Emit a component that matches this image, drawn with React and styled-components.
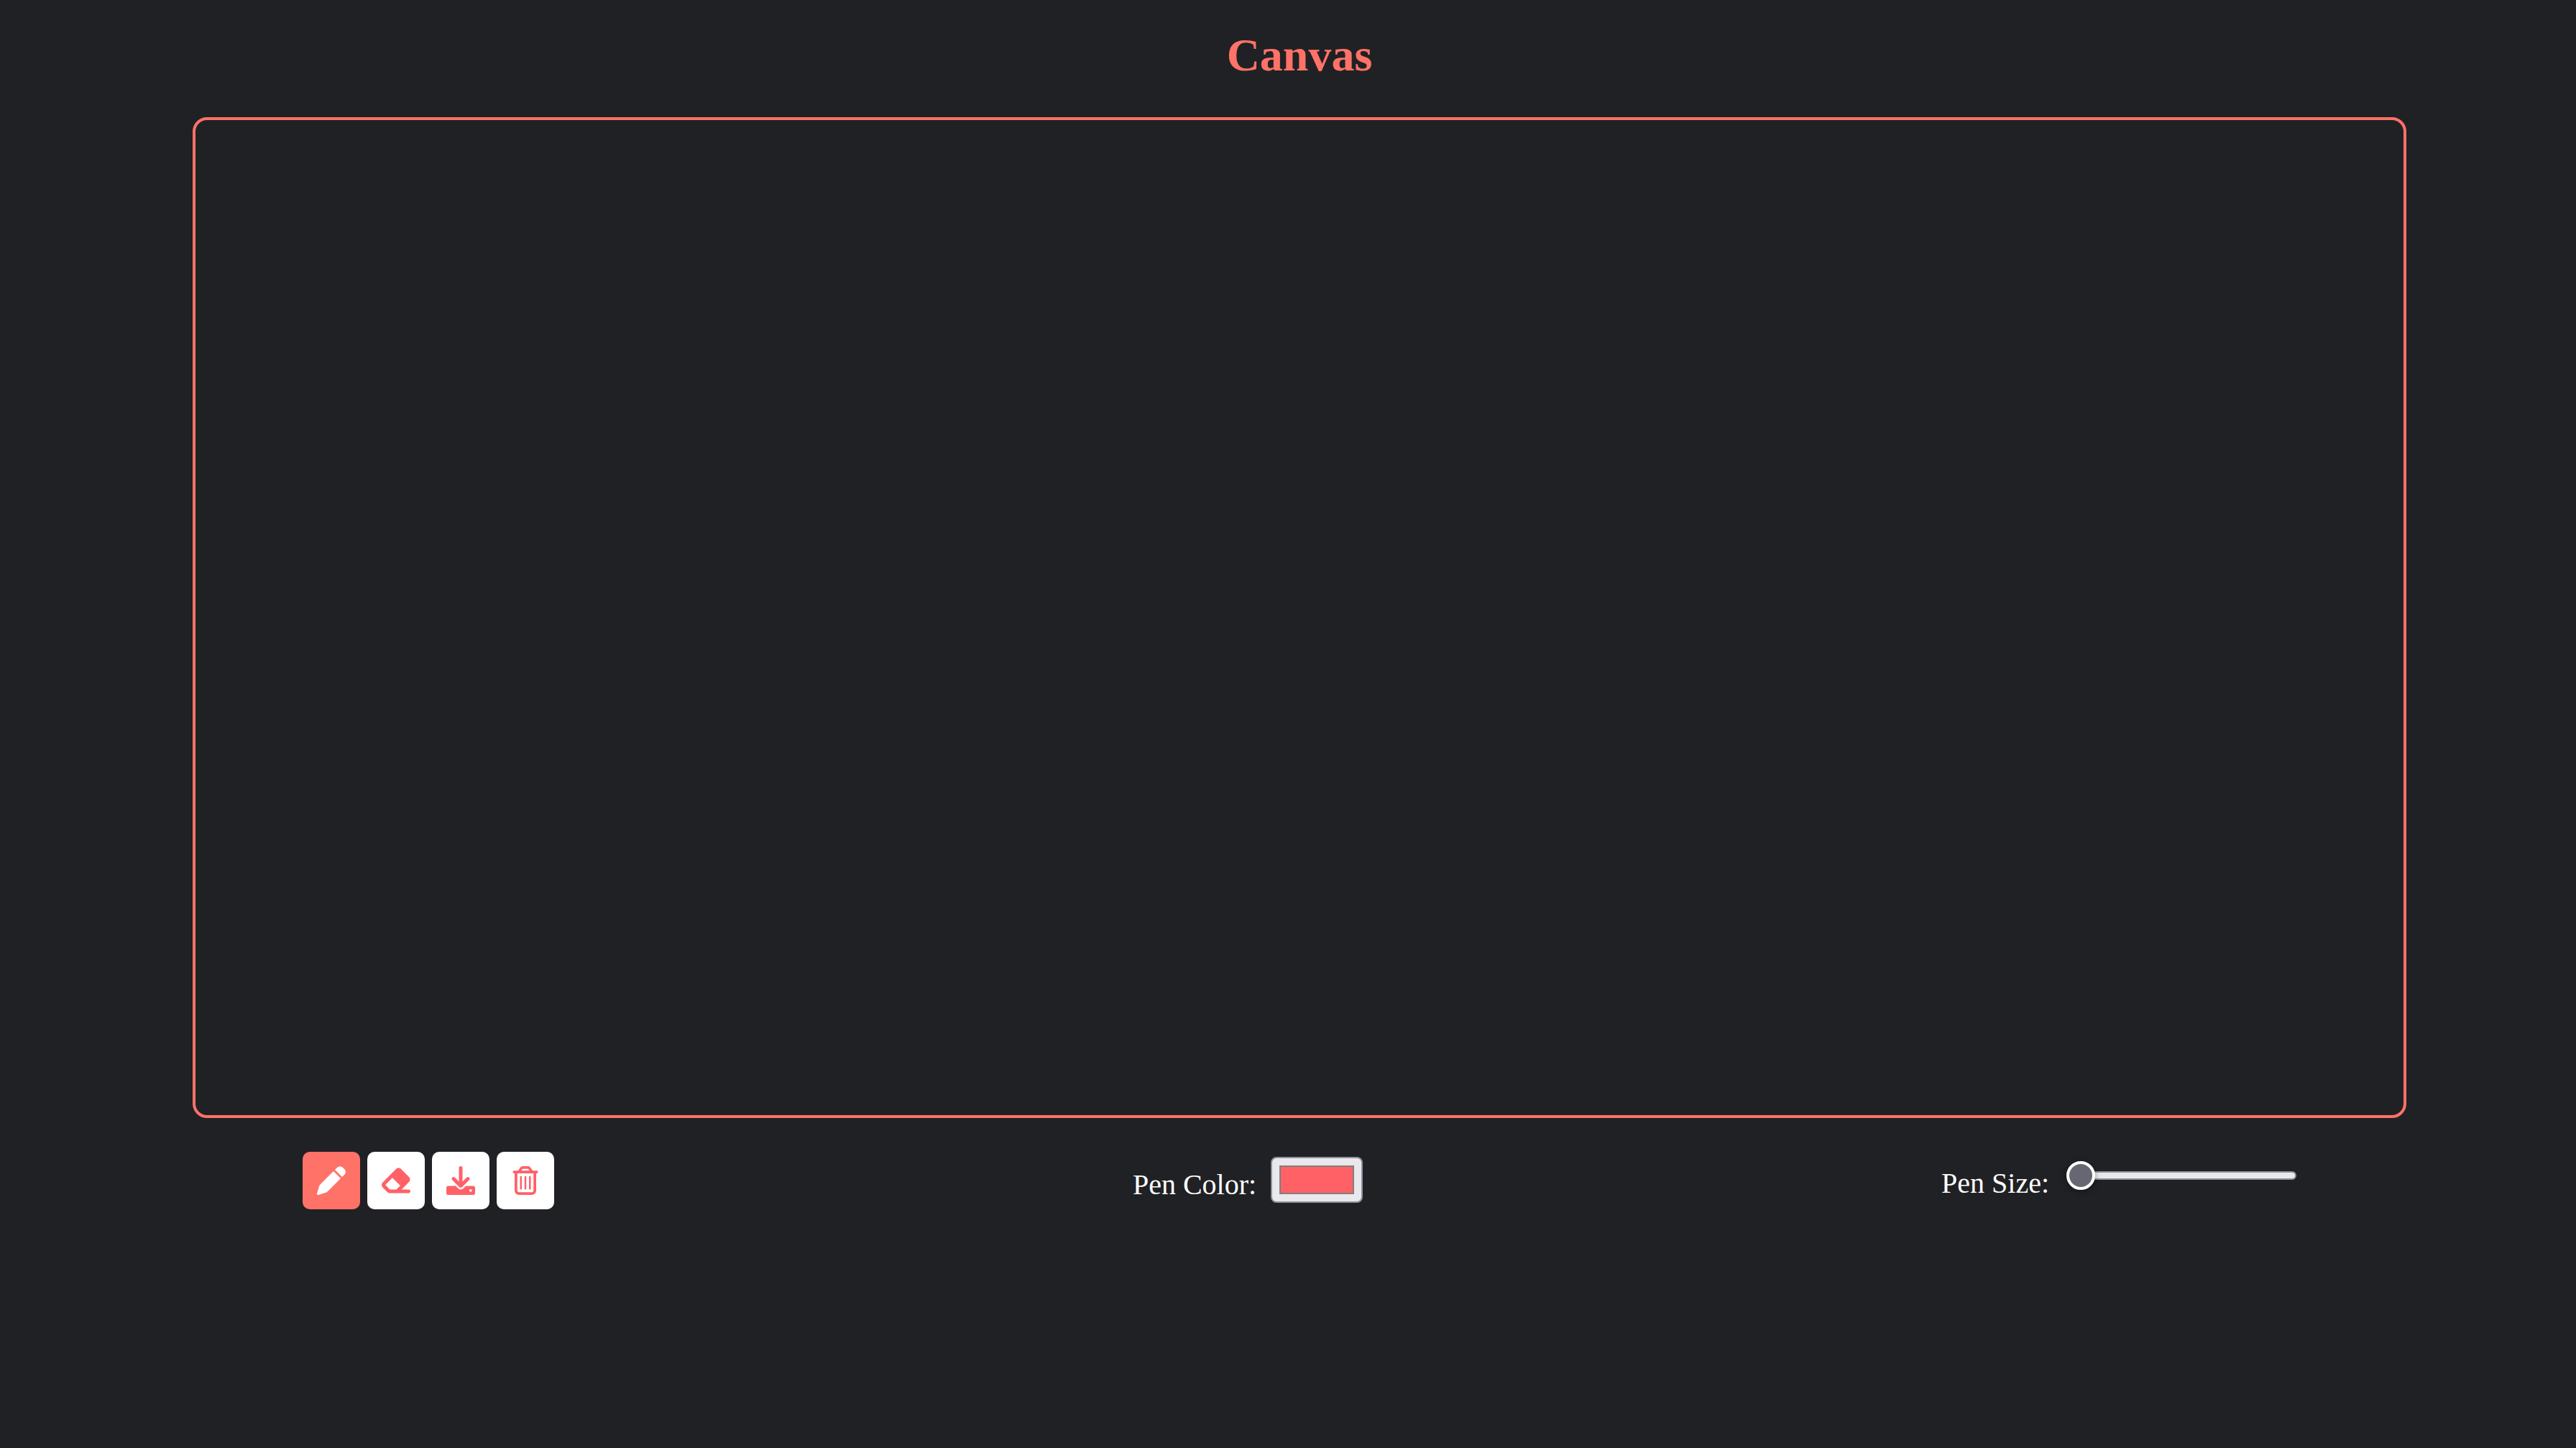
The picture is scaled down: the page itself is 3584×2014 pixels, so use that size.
import React, { useState } from "react";
import styled, { createGlobalStyle } from "styled-components";
import { FaRegTrashCan } from "react-icons/fa6";

const coral = "#ff7268";
const pink = "#ff6167";

const GlobalStyle = createGlobalStyle`
  *, *::before, *::after {
    box-sizing: border-box;
  }
  body {
    margin: 0;
    background: #202124;
    color: #fff;
    font-family: "Liberation Serif", "Times New Roman", serif;
  }
`;

const Page = styled.main`
  display: flex;
  flex-direction: column;
  align-items: center;
  padding: 40px 0 0 32px;
`;

const Title = styled.h1`
  margin: 0 0 49px;
  font-size: 64px;
  line-height: 74px;
  font-weight: 700;
  color: ${coral};
`;

const Board = styled.canvas`
  display: block;
  width: calc(100% - 472px);
  height: 1392px;
  border: 4px solid ${coral};
  border-radius: 20px;
`;

const Toolbar = styled.div`
  display: flex;
  justify-content: space-between;
  align-items: flex-start;
  width: calc(100% - 778px);
  margin-top: 47px;
`;

const Tools = styled.div`
  display: flex;
  gap: 10px;
`;

const ToolButton = styled.button`
  display: flex;
  align-items: center;
  justify-content: center;
  width: 80px;
  height: 80px;
  padding: 0;
  border: 0;
  border-radius: 10px;
  background: ${({ $active }) => ($active ? coral : "#fff")};
  color: ${({ $active }) => ($active ? "#fff" : pink)};
  cursor: pointer;

  svg {
    width: 40px;
    height: 40px;
    fill: currentColor;
  }
`;

const Field = styled.div`
  display: flex;
  align-items: flex-start;
  gap: ${({ $gap }) => $gap}px;
  padding-top: ${({ $top }) => $top}px;
`;

const FieldLabel = styled.label`
  padding-top: ${({ $drop }) => $drop}px;
  font-size: 40px;
  line-height: 46px;
`;

const ColorInput = styled.input`
  appearance: none;
  width: 128px;
  height: 64px;
  padding: 10px;
  border: 2px solid #8f8f9d;
  border-radius: 8px;
  background: #e9e9ed;

  &::-webkit-color-swatch-wrapper {
    padding: 0;
  }
  &::-webkit-color-swatch {
    border: 2px solid #808080;
    border-radius: 0;
  }
`;

const SizeInput = styled.input`
  appearance: none;
  width: 320px;
  height: 40px;
  margin: 0;
  background: transparent;

  &::-webkit-slider-runnable-track {
    height: 12px;
    border: 2px solid #8f8f9d;
    border-radius: 6px;
    background: #e9e9ed;
  }
  &::-webkit-slider-thumb {
    appearance: none;
    width: 40px;
    height: 40px;
    margin: -16px 0 0 -2px;
    border: 4px solid #fff;
    border-radius: 50%;
    background: #676774;
    box-shadow: 0 2px 8px rgba(0, 0, 0, 0.4);
  }
`;

const PencilIcon = () => (
  <svg viewBox="0 0 120 120" aria-hidden="true">
    <path d="M69 21 99 51 45 105Q42 108 37 110L6 120Q-1 121 0 114L9 84Q11 79 14 76Z" />
    <path d="M75 15 85 5Q96-4 107 5L115 13Q124 24 115 35L105 45Z" />
  </svg>
);

const EraserIcon = () => (
  <svg viewBox="38 6 506 506" aria-hidden="true">
    <path d="M290.7 57.4L57.4 290.7c-25 25-25 65.5 0 90.5l80 80c12 12 28.3 18.7 45.3 18.7H512c17.7 0 32-14.3 32-32s-14.3-32-32-32H387.9L518.6 285.3c25-25 25-65.5 0-90.5L381.3 57.4c-25-25-65.5-25-90.5 0zM297.4 416H182.6l-80-80L227.3 211.3 364.7 348.7 297.4 416z" />
  </svg>
);

const DownloadIcon = () => (
  <svg viewBox="0 0 512 512" aria-hidden="true">
    <path d="M288 32c0-17.7-14.3-32-32-32s-32 14.3-32 32V274.7l-73.4-73.4c-12.5-12.5-32.8-12.5-45.3 0s-12.5 32.8 0 45.3l128 128c12.5 12.5 32.8 12.5 45.3 0l128-128c12.5-12.5 12.5-32.8 0-45.3s-32.8-12.5-45.3 0L288 274.7V32z" />
    <path d="M36 352Q0 352 0 388V476Q0 512 36 512H476Q512 512 512 476V388Q512 352 476 352H346.5l-45.3 45.3c-25 25-65.5 25-90.5 0L165.5 352H36zM432 408a24 24 0 1 1 0 48 24 24 0 1 1 0-48z" />
  </svg>
);

const tools = [
  { name: "Pencil", Icon: PencilIcon },
  { name: "Eraser", Icon: EraserIcon },
  { name: "Download", Icon: DownloadIcon },
  { name: "Clear", Icon: FaRegTrashCan },
];

export default function App() {
  const [tool, setTool] = useState("Pencil");
  const [color, setColor] = useState(pink);
  const [size, setSize] = useState(1);

  return (
    <>
      <GlobalStyle />
      <Page>
        <Title>Canvas</Title>
        <Board />
        <Toolbar>
          <Tools>
            {tools.map(({ name, Icon }) => (
              <ToolButton
                key={name}
                type="button"
                aria-label={name}
                $active={tool === name}
                onClick={() => setTool(name)}
              >
                <Icon />
              </ToolButton>
            ))}
          </Tools>
          <Field $gap={20} $top={7}>
            <FieldLabel htmlFor="pen-color" $drop={16}>Pen Color:</FieldLabel>
            <ColorInput
              id="pen-color"
              type="color"
              value={color}
              onChange={(e) => setColor(e.target.value)}
            />
          </Field>
          <Field $gap={24} $top={13}>
            <FieldLabel htmlFor="pen-size" $drop={8}>Pen Size:</FieldLabel>
            <SizeInput
              id="pen-size"
              type="range"
              min="1"
              max="50"
              value={size}
              onChange={(e) => setSize(Number(e.target.value))}
            />
          </Field>
        </Toolbar>
      </Page>
    </>
  );
}
